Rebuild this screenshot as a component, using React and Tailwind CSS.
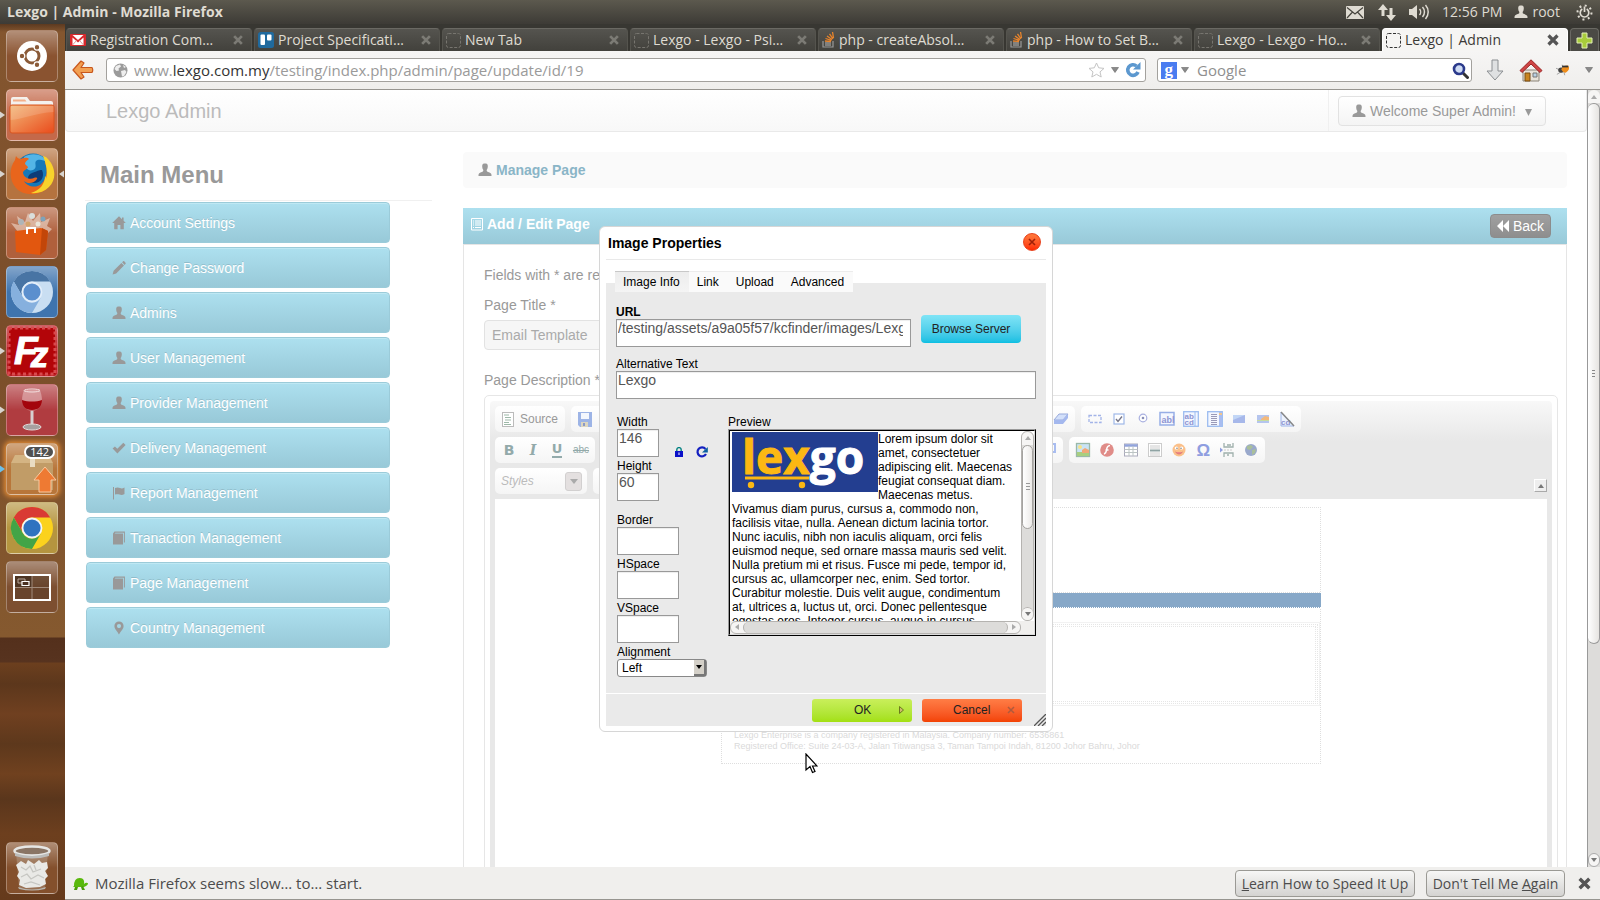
import React from "react";

const UI = "font-['Open_Sans','Noto_Sans',sans-serif]";

/* ---------- small glyph icons ---------- */
const G = ({ children, className = "", size = 14, vb = "0 0 14 14" }) => (
  <svg aria-hidden="true" width={size} height={size} viewBox={vb} className={"shrink-0 " + className}>{children}</svg>
);
const UserGlyph = (p) => (
  <G {...p}><path fill="currentColor" d="M4.2 3C4.2 1.2 5.300.6 7 .6S9.800 1.200 9.800 3c0 1.500-.3 2.800-.9 3.600-.3.400-.3 1.700.2 1.900 1 .6 4 1.400 4.200 2.500.2.600.2 1.400.2 2H.5c0-.6 0-1.400.2-2 .2-1.100 3.200-1.900 4.200-2.500.5-.2.500-1.500.2-1.900C4.500 5.800 4.200 4.500 4.200 3z" /></G>
);
const HomeGlyph = () => (<G><path fill="currentColor" d="M7 .3 .2 7h2v6.200h3.400V9h2.800v4.200h3.400V7h2L11.600 4.800V1.600H10v1.700z" /></G>);
const PencilGlyph = () => (<G><path fill="currentColor" d="M.6 13.400 1.600 9.800 9.400 2l2.600 2.600-7.800 7.800zM10.100 1.300 11.200.3c.6-.5 1 0 1.700.7s1.200 1.200.7 1.800l-1 1.100z" /></G>);
const CheckGlyph = () => (<G><path fill="currentColor" d="M.6 7.600 2.900 5.400 5.300 7.800 11.300 1.700 13.600 4 5.400 12.400z" /></G>);
const FlagGlyph = () => (<G><path fill="currentColor" d="M1 1h1v12.400H1zM3 2c2-1 4-.6 5 0s2.500.8 4.500-.4V8c-2 1.200-3.500 1-5 .5S4.500 8 3 8.600z" /></G>);
const BookGlyph = () => (<G><path fill="currentColor" d="M1 2.500 2.500.6h10.400v10.900h-1V1.700H3.300L2.700 2.500h8.300v11H1z" /></G>);
const PinGlyph = () => (<G><path fill="currentColor" fillRule="evenodd" d="M7 .5c2.600 0 4.600 2 4.600 4.600C11.600 8.500 8.500 10.500 7 13.600 5.500 10.500 2.400 8.500 2.400 5.100 2.400 2.500 4.400.5 7 .5zm0 2.500a2.100 2.100 0 1 0 0 4.200A2.100 2.100 0 0 0 7 3z" /></G>);
const ListGlyph = () => (<G className="text-white"><path d="M1.500 1.500h11v11.500h-11z" fill="none" stroke="currentColor" /><path d="M3 4h1M5 4h6M3 6h1M5 6h6M3 8h1M5 8h6M3 10.500h1M5 10.500h6" stroke="currentColor" /></G>);

const CrossGlyph = ({ className = "", size = 13 }) => (
  <G size={size} className={className}><path d="M2.500 2.500l9 9M11.500 2.500l-9 9" stroke="currentColor" strokeWidth="3.200" /></G>
);

/* ---------- top panel ---------- */
function TopPanel() {
  return (
    <header className={"flex h-6 shrink-0 items-center bg-linear-to-b from-[#5c594e] to-[#3d3b36] px-[7px] text-sm text-[#dfdbd2] " + UI}>
      <h1 className="text-sm font-bold">Lexgo | Admin - Mozilla Firefox</h1>
      <div className="ml-auto flex items-center">
        <svg width="18" height="13" viewBox="0 0 18 13" className="mr-[14px]"><rect width="18" height="13" rx="1" fill="#dfdbd2" /><path d="M1 1.500 9 8l8-6.500M1 12l5.500-6M17 12l-5.500-6" fill="none" stroke="#45433c" strokeWidth="1.200" /></svg>
        <svg width="18" height="17" viewBox="0 0 18 17" className="mr-[13px]"><path fill="#dfdbd2" d="M5 0l5 6H6.500v6h-3V6H0zM13 17l-5-6h3.500V4h3v7H18z" /></svg>
        <svg width="21" height="16" viewBox="0 0 21 16" className="mr-3"><path fill="#dfdbd2" d="M0 5h3l5-4v14l-5-4H0z" /><path d="M10.500 5c1.500 1.600 1.500 4.400 0 6M13.500 3c2.600 2.800 2.600 7.200 0 10M16.500 1c3.600 4 3.600 10 0 14" fill="none" stroke="#dfdbd2" strokeWidth="1.500" /></svg>
        <span className="mr-3">12:56 PM</span>
        <UserGlyph className="mr-1" />
        <span className="mr-4">root</span>
        <svg width="17" height="17" viewBox="0 0 17 17"><path d="M6.300 5a4.300 4.300 0 1 0 4.400 0M8.500 2.500v5.500" fill="none" stroke="#dfdbd2" strokeWidth="1.700" /><circle cx="8.500" cy="8.500" r="7" fill="none" stroke="#dfdbd2" strokeWidth="2" strokeDasharray="2 3.498" /></svg>
      </div>
    </header>
  );
}

/* ---------- launcher ---------- */
const Chrome = ({ a, b, c, core, dark }) => (
  <svg width="46" height="46" viewBox="0 0 46 46">
    <circle cx="23" cy="23" r="21" fill={b} />
    <path d="M4.800 12.500A21 21 0 0 1 41.200 12.500H23A10.500 10.500 0 0 0 13.900 28.200z" fill={a} />
    <path d="M4.800 12.500A21 21 0 0 0 23 44L32.100 28.200A10.500 10.500 0 0 1 13.900 28.200z" fill={c} />
    <circle cx="23" cy="23" r="9.500" fill={core} stroke={dark} strokeWidth="1.800" />
  </svg>
);

const icons = {
  files: (
    <svg width="48" height="46" viewBox="0 0 48 46">
      <defs><linearGradient id="fo" x1="0" y1="0" x2="1" y2="1"><stop offset="0" stopColor="#f2b878" /><stop offset="1" stopColor="#ea4b1c" /></linearGradient></defs>
      <path d="M3 7q0-2 2-2h14l3 4h21q2 0 2 2v8H3z" fill="#f4f1ee" /><path d="M5 7.500h12l1.500 2H5z" fill="#f3b08a" />
      <rect x="2" y="13" width="44" height="28" rx="2" fill="url(#fo)" stroke="#d9541f" /><path d="M2.500 28C15 27 28 21 45.500 20V14h-43z" fill="#fff" opacity=".15" />
    </svg>
  ),
  firefox: (
    <svg width="46" height="46" viewBox="0 0 46 46">
      <circle cx="24" cy="21" r="18.500" fill="#1678b8" /><path d="M15 6c8-5 20-3 24 6-5-4-10-4-12-2s2 7-3 9-8-3-9-6z" fill="#54b5e6" /><path d="M33 19c3 7-1 13-8 13s-8-8-2-10 6-3 10-3z" fill="#0d3c78" />
      <path d="M38 9c7 8 8 18 2 26C33 45 15 46 7 37 0 29 0 17 6 9l1-4c1 2 3 3 5 3 4-2 7-1 8 0-2 1-4 3-4 5l3 3c0 2-5 3-5 6 1 5 7 7 11 5 2-1 4 0 3 1-3 5-10 5-13 2 3 6 13 8 18 2 5-5 6-14 3-20z" fill="#e8651c" />
      <path d="M37 6c10 9 11 22 3 30-5 5-12 7-18 6 9-3 14-9 14-17 1 1 1 2 1 3 2-7 0-16-3-23z" fill="#f8d32c" />
    </svg>
  ),
  software: (
    <svg width="46" height="46" viewBox="0 0 46 46">
      <path d="M9 22 2 13l8 2-2-9 8 6 3-9 5 8 7-8 1 9 9-4-3 8 5 3-5 5z" fill="#f6e6da" opacity=".55" />
      <circle cx="12" cy="12" r="3" fill="#aeb5b8" /><circle cx="23" cy="6" r="3" fill="#dadfdc" /><circle cx="34" cy="9" r="2.500" fill="#7da3ba" /><circle cx="19" cy="14" r="2.500" fill="#d4a36a" /><circle cx="29" cy="14" r="2.500" fill="#e9e4d8" />
      <path d="M6 21l26-3 7 3-2 19-6 5-24-3z" fill="#e2570f" /><path d="M33 18l6 3-2 19-6 5z" fill="#c24609" /><path d="M18 24v-6h8v5" fill="none" stroke="#fff" strokeWidth="2" />
    </svg>
  ),
  filezilla: (
    <svg width="50" height="50" viewBox="0 0 50 50">
      <rect x="2" y="2" width="46" height="46" fill="#b30509" stroke="#d94a4e" strokeWidth="3" strokeDasharray="3 2.500" />
      <text x="7" y="38" fontSize="39" fontWeight="bold" fontStyle="italic" fill="#fff" stroke="#fff" fontFamily="Liberation Sans, sans-serif">F<tspan dx="-7" dy="3" fontSize="35">z</tspan></text>
    </svg>
  ),
  wine: (
    <svg width="40" height="48" viewBox="0 0 40 48">
      <path d="M12 4h16c4 11 2 20-8 21C10 24 8 15 12 4z" fill="#e5b7b9" opacity=".6" /><path d="M10 14c6 2 14 2 20 0 0 6-3 10-10 10-7 0-10-4-10-10z" fill="#a3050c" />
      <path d="M18.500 25h3v14h-3z" fill="#d7d0d0" /><ellipse cx="20" cy="41" rx="9" ry="3" fill="#a6a1a0" stroke="#e3dcda" /><ellipse cx="20" cy="4.500" rx="8" ry="1.500" fill="none" stroke="#f3dede" />
    </svg>
  ),
  updater: (
    <svg width="50" height="48" viewBox="0 0 50 48">
      <path d="M8 10h34l4 8v27H4V18z" fill="#d4b483" /><path d="M4 18h42v27H4z" fill="#c19c67" /><path d="M23 9h5v13h-5z" fill="#e9dcc2" />
      <path d="M38 22l11 13h-5v12H32V35h-5z" fill="#ee7a33" stroke="#f9c9a0" />
    </svg>
  ),
  workspace: (
    <svg width="38" height="27" viewBox="0 0 38 27">
      <path d="M2 2h17v11H2z" fill="#3d281b" /><rect x="1" y="1" width="36" height="25" fill="#5a3d2a" fillOpacity=".6" stroke="#fff" strokeWidth="2" /><path d="M19 2v23M2 13.500h34" stroke="#a08a7a" />
      <path d="M5 5h7v4H5z" fill="none" stroke="#b8a89c" /><path d="M9 7.500h7v4H9z" fill="#4a3020" stroke="#fff" strokeWidth="1.200" />
    </svg>
  ),
};

const launcher = [
  { name: "Files", icon: icons.files, bg: "bg-[#c4694a]", run: true },
  { name: "Firefox", icon: icons.firefox, bg: "bg-[#b5733f]", run: true, focus: true },
  { name: "Software Center", icon: icons.software, bg: "bg-[#b0603c]" },
  { name: "Chromium", icon: <Chrome a="#4874a4" b="#c9def2" c="#86b0de" core="#5b8fce" dark="#e3eefa" />, bg: "bg-[#3f74ae]" },
  { name: "FileZilla", icon: icons.filezilla, bg: "bg-[#b51c20]", run: true },
  { name: "Wine", icon: icons.wine, bg: "bg-[#b03c40]", run: true },
  { name: "Software Updater", icon: icons.updater, bg: "bg-[#b8763a] shadow-[0_0_5px_2px_#e08a35]", run: true, badge: "142" },
  { name: "Chrome", icon: <Chrome a="#d93a34" b="#fbd21d" c="#43a447" core="#2f73c0" dark="#f5f5f5" />, bg: "bg-[#b5953f]" },
  { name: "Workspace Switcher", icon: icons.workspace, bg: "bg-[#7d4f30]" },
];

const tile = "relative flex h-[52px] w-[52px] shrink-0 items-center justify-center rounded-[5px] border border-white/30 bg-linear-to-b from-white/35 via-white/0 to-white/0";

function Launcher() {
  return (
    <nav aria-label="Launcher" className="relative flex w-[65px] shrink-0 flex-col items-center bg-[linear-gradient(180deg,#5c3a20_0,#84562f_8px,#7a4d2a_300px,#85592f_613px,#54301c_614px,#57331f_638px,#6c3f1e_639px,#5c371c_660px,#704020_690px,#5d381c_720px,#70411f_750px,#5a361c_775px,#6d3f1e_810px,#653a1c_876px)] pt-[6px] pr-[1px] pb-[6px]">
      <button type="button" aria-label="Dash home" className={tile + " bg-[#8a5330]"}>
        <svg width="30" height="30" viewBox="0 0 30 30">
          <circle cx="15" cy="15" r="15" fill="#fff" /><circle cx="15" cy="15" r="7" fill="none" stroke="#8a5a38" strokeWidth="3" />
          <g fill="#8a5a38" stroke="#fff" strokeWidth="1.200"><circle cx="5" cy="15" r="2.800" /><circle cx="20" cy="6.300" r="2.800" /><circle cx="20" cy="23.700" r="2.800" /></g>
        </svg>
      </button>
      <ul className="mt-[7px] flex flex-col gap-[7px]">
        {launcher.map((l) => (
          <li key={l.name} className="relative">
            <button type="button" aria-label={l.name} className={tile + " " + l.bg}>
              {l.icon}
              {l.badge && <span className={"absolute top-[1px] right-[2px] rounded-full border-2 border-white bg-[#505050] px-1 text-[11px] leading-[10px] text-white " + UI}>{l.badge}</span>}
            </button>
            {l.run && <svg width="5" height="10" viewBox="0 0 5 10" className="absolute top-[21px] left-[-6px]"><path d="M0 1.500L5 5 0 8.500z" fill={l.badge ? "#6cc0ea" : "#d8d4cf"} /></svg>}
            {l.focus && <svg width="5" height="10" viewBox="0 0 5 10" className="absolute top-[21px] right-[-6px]"><path d="M5 1.500L0 5l5 3.500z" fill="#d8d4cf" /></svg>}
          </li>
        ))}
      </ul>
      <button type="button" aria-label="Trash" className={tile + " mt-auto bg-[#84502c]"}>
        <svg width="40" height="46" viewBox="0 0 40 46">
          <path d="M4 7h32l-3 36q-13 4-26 0z" fill="#d9d2ca" opacity=".25" /><path d="M6 42q14 5 28 0l-1 2q-13 3-26 0z" fill="#b9b6b0" />
          <path d="M4 20l5-4 5 3 2-4 6 4 5-4 3 3 5-1 1 6-3 3 3 5-3 3 1 5-6 3-14 1-7-3 1-5-3-4 2-4z" fill="#e9e9e6" /><path d="M9 22l5 3 4-4 3 6 8-3M9 32l6-3 4 5 7-4 6 3M12 39l7-2 9 3M22 20l2 5" fill="none" stroke="#c6c6c2" strokeWidth="1.300" />
          <ellipse cx="20" cy="6" rx="17.500" ry="4.500" fill="#8a7565" stroke="#e6e6e4" strokeWidth="2.500" /><path d="M3 8q17 6 34 0v3q-17 5-34 0z" fill="#bcbcba" />
        </svg>
      </button>
    </nav>
  );
}

/* ---------- browser chrome ---------- */
const EmptyFav = ({ dark }) => (
  <svg width="15" height="15" viewBox="0 0 15 15" className="shrink-0"><rect x=".5" y=".5" width="14" height="14" rx="2" fill="none" stroke={dark ? "#333" : "#77756f"} strokeDasharray="3 1.500" /></svg>
);
const Gmail = () => (<svg width="16" height="12" viewBox="0 0 16 12" className="shrink-0"><rect width="16" height="12" rx="1" fill="#d8282c" /><path d="M2.500 1h11L8 6z" fill="#fff" /><path d="M2.500 11V3.500L8 8.500l5.500-5V11z" fill="#fff" /><path d="M2.500 11l4-4.500M13.500 11l-4-4.500" stroke="#d99" /></svg>);
const Trello = () => (<svg width="16" height="16" viewBox="0 0 16 16" className="shrink-0"><rect width="16" height="16" rx="2.500" fill="#206a9e" /><rect x="2.500" y="2.500" width="4.500" height="10.500" rx="1" fill="#fff" /><rect x="9" y="2.500" width="4.500" height="6" rx="1" fill="#fff" /></svg>);
const Stack = () => (<svg width="13" height="16" viewBox="0 0 13 16" className="shrink-0"><path d="M1 9v6h10V9" fill="none" stroke="#999" strokeWidth="1.200" /><path d="M3 13h6M3 11h6" stroke="#bbb" /><path d="M3 9l6 .5M3.500 6.500l6 1.800M5 4l5 3.500M7.500 1.800l3.500 5M10.500 0l1 6" stroke="#e8842c" strokeWidth="1.300" /></svg>);

const tabs = [
  { fav: <Gmail />, label: "Registration Com…" },
  { fav: <Trello />, label: "Project Specificati…" },
  { fav: <EmptyFav />, label: "New Tab" },
  { fav: <EmptyFav />, label: "Lexgo - Lexgo - Psi…" },
  { fav: <Stack />, label: "php - createAbsol…" },
  { fav: <Stack />, label: "php - How to Set B…" },
  { fav: <EmptyFav />, label: "Lexgo - Lexgo - Ho…" },
  { fav: <EmptyFav dark />, label: "Lexgo | Admin", active: true },
];

function TabStrip() {
  return (
    <div className={"flex h-[27px] shrink-0 items-end gap-[2px] bg-[#383732] pr-[1px] pl-[1px] text-sm " + UI}>
      {tabs.map((t) => (
        <div key={t.label} className={"flex h-[23px] min-w-0 flex-1 items-center rounded-t-[4px] border-x border-t pr-[7px] pl-[3px] " + (t.active ? "border-white bg-[#f6f5f3] text-[#3c3b37]" : "border-[#6a6963] border-x-[#55544e] bg-linear-to-b from-[#55544f] to-[#42413c] text-[#dfdbd2]")}>
          {t.fav}
          <button type="button" className="ml-1 min-w-0 flex-1 overflow-hidden text-left leading-5 whitespace-nowrap">{t.label}</button>
          <button type="button" aria-label="Close tab"><CrossGlyph className={t.active ? "text-[#555]" : "text-[#7c7b75]"} size={t.active ? 14 : 12} /></button>
        </div>
      ))}
      <button type="button" aria-label="New tab" className="flex h-[23px] w-[29px] items-center justify-center rounded-t-[4px] border-x border-t border-[#6a6963] bg-[#4b4a45]">
        <svg width="17" height="17" viewBox="0 0 17 17"><path d="M6 1h5v5h5v5h-5v5H6v-5H1V6h5z" fill="#a8cc3c" stroke="#e4f0b8" /></svg>
      </button>
    </div>
  );
}

const Caret = ({ className = "" }) => (<svg width="8" height="6" viewBox="0 0 8 6" className={className}><path d="M.5.5h7L4 5.500z" fill="#8a8a8a" stroke="#666" strokeWidth=".6" /></svg>);

function NavBar() {
  return (
    <div className={"flex h-[39px] shrink-0 items-center border-b border-[#979590] bg-linear-to-b from-[#f6f5f4] to-[#efeeec] pl-[7px] text-[15px] " + UI}>
      <button type="button" aria-label="Back" className="mr-3">
        <svg width="22" height="20" viewBox="0 0 22 20"><path d="M1 10l8-9 3 2-3 4.500H20q1.500 2.500 0 5H9l3 4.500-3 2z" fill="#f2a052" stroke="#c8571c" strokeWidth="1.200" strokeLinejoin="round" /></svg>
      </button>
      <form className="flex h-6 min-w-0 flex-1 items-center rounded-[3px] border border-[#a3a19d] bg-white pr-1 pl-[6px]">
        <svg width="15" height="15" viewBox="0 0 15 15" className="mr-[6px] shrink-0"><circle cx="7.500" cy="7.500" r="7" fill="#9b9b9b" /><path d="M3 3l4-1.500 1 2-2.500 2 .5 2L3.500 8 1.500 6zM8 8l4-1 1.500 2-2.500 4-2 .5zM10 2l3 2-2 1z" fill="#eee" /></svg>
        <p className="min-w-0 flex-1 overflow-hidden whitespace-nowrap text-[#9a9a9a]">www.<span className="text-[#333]">lexgo.com.my</span>/testing/index.php/admin/page/update/id/19</p>
        <svg width="17" height="16" viewBox="0 0 17 16" className="mr-[6px]"><path d="M8.500 1l2.200 4.800 5.300.6-4 3.500 1.200 5.100-4.700-2.700L3.800 15 5 9.900 1 6.400l5.300-.6z" fill="#fff" stroke="#c4c4c4" /></svg>
        <Caret className="mr-[6px]" />
        <svg width="16" height="16" viewBox="0 0 16 16"><path d="M11.500 4A5.300 5.300 0 1 0 13 10" fill="none" stroke="#5c98cf" strokeWidth="3.600" /><path d="M15.500 0v7.500H8z" fill="#5c98cf" /></svg>
      </form>
      <form className="ml-[11px] flex h-6 w-[315px] items-center rounded-[3px] border border-[#a3a19d] bg-white pr-[2px] pl-[3px]">
        <svg width="16" height="17" viewBox="0 0 16 17" className="mr-1 shrink-0"><rect width="16" height="17" fill="#4a7cf0" /><text x="3.500" y="12.500" fontSize="17" fontWeight="bold" fill="#fff" fontFamily="Liberation Serif, serif">g</text></svg>
        <Caret className="mr-2" />
        <input aria-label="Search" placeholder="Google" className="min-w-0 flex-1 outline-none placeholder:text-[#8f8f8f]" />
        <svg width="17" height="17" viewBox="0 0 17 17"><path d="M10.500 10.500l5 5" stroke="#333" strokeWidth="3" strokeLinecap="round" /><circle cx="7" cy="7" r="5" fill="#cfdcf4" stroke="#2b3a8c" strokeWidth="2.600" /></svg>
      </form>
      <button type="button" aria-label="Downloads" className="ml-[13px]"><svg width="20" height="22" viewBox="0 0 20 22"><path d="M7 1h6v11h5l-8 9-8-9h5z" fill="#dfe1e2" stroke="#8b8f92" /></svg></button>
      <button type="button" aria-label="Home" className="ml-[14px]"><svg width="24" height="23" viewBox="0 0 24 23"><path d="M4 11h16v11H4z" fill="#e8e3da" stroke="#8b8478" /><path d="M6 14h5v8H6z" fill="#c88420" stroke="#7a4d10" /><path d="M14 14h4v4h-4z" fill="#b9d2e4" stroke="#777" /><path d="M12 .8L1 11.500l2 2L12 5l9 8.500 2-2z" fill="#cf4545" stroke="#992424" /></svg></button>
      <button type="button" aria-label="Firebug" className="ml-3"><svg width="16" height="14" viewBox="0 0 18 16"><path d="M1 6l5 2M2 13l5-3M8 2l1 5M11 14l-1-4" stroke="#999" /><ellipse cx="7" cy="8" rx="3.500" ry="3" fill="#444" /><path d="M7 7q3-5 8-4 3 4-3 8-3 0-5-4z" fill="#ef8d1a" /><path d="M8 4l7 0" stroke="#333" strokeWidth="2" /></svg></button>
      <Caret className="mr-[7px] ml-[14px]" />
    </div>
  );
}

function NoticeBar() {
  const btn = "h-[27px] rounded-[4px] border border-[#9a9994] bg-linear-to-b from-[#f7f7f6] to-[#d4d3d1] px-1 text-sm whitespace-nowrap";
  return (
    <div className={"flex h-[33px] shrink-0 items-center border-b border-[#979590] bg-[#f0efed] pt-[1px] pr-2 pl-[7px] text-[15px] text-[#4c4c4c] " + UI}>
      <svg width="16" height="14" viewBox="0 0 16 14" className="mr-[7px]"><path d="M2 9Q2 1 7.500 1T12 7q2-2 3.500-1T14 9l-2 1H1z" fill="#59b80c" /><path d="M3 10l-1 3h3l1-3M9 10l1 3h3l-2-4" fill="#4a9c0a" /></svg>
      <p>Mozilla Firefox seems slow… to… start.</p>
      <button type="button" className={btn + " ml-auto w-[180px]"}><u>L</u>earn How to Speed It Up</button>
      <button type="button" className={btn + " ml-[11px] w-[139px]"}>Don't Tell Me <u>A</u>gain</button>
      <button type="button" aria-label="Dismiss" className="ml-3"><CrossGlyph size={15} className="text-[#555]" /></button>
    </div>
  );
}

/* ---------- page ---------- */
const menu = [
  ["Account Settings", <HomeGlyph />], ["Change Password", <PencilGlyph />], ["Admins", <UserGlyph />], ["User Management", <UserGlyph />],
  ["Provider Management", <UserGlyph />], ["Delivery Management", <CheckGlyph />], ["Report Management", <FlagGlyph />],
  ["Tranaction Management", <BookGlyph />], ["Page Management", <BookGlyph />], ["Country Management", <PinGlyph />],
];

function SideMenu() {
  return (
    <aside className="w-[347px] shrink-0">
      <h2 className="border-b border-[#f0f0f0] pt-[23px] pb-[5px] pl-[15px] text-2xl leading-10 font-bold text-[#999]">Main Menu</h2>
      <ul className="mt-[1px] ml-[1px] flex w-[304px] flex-col gap-1">
        {menu.map(([label, icon]) => (
          <li key={label}>
            <a href="#" className="flex h-[41px] items-center gap-1 rounded-[4px] border border-[#9bcbd9] bg-linear-to-b from-[#ade0ef] to-[#98c9d8] pl-[25px] text-sm text-white shadow-[inset_0_1px_0_#bfe8f3] [text-shadow:0_-1px_0_rgba(0,0,0,0.12)]">
              <span className="text-[#999]">{icon}</span>{label}
            </a>
          </li>
        ))}
      </ul>
    </aside>
  );
}

const B = "#a3b4e8";
const I16 = ({ children }) => <svg width="16" height="16" viewBox="0 0 16 16">{children}</svg>;
const formIcons = [
  ["Form", <I16><rect x="2" y="4.500" width="12" height="7" fill="none" stroke={B} strokeWidth="1.300" strokeDasharray="3 1.500" /></I16>],
  ["Checkbox", <I16><rect x="3" y="3" width="10" height="10" fill="#fff" stroke="#9fb8e8" strokeWidth="1.200" /><path d="M5 8l2 2.500 4-5" fill="none" stroke="#778" strokeWidth="1.400" /></I16>],
  ["Radio Button", <I16><circle cx="8" cy="7" r="3.800" fill="#fff" stroke="#a9b0e0" strokeWidth="1.200" /><circle cx="8" cy="7" r="1.300" fill="#8a90b8" /></I16>],
  ["Text Field", <I16><rect x="1" y="1.500" width="14" height="12.500" fill="#f4f7ff" stroke="#97aee6" strokeWidth="1.500" /><text x="2.500" y="11.500" fontSize="9" fontWeight="bold" fill="#8d94d2" fontFamily="Liberation Sans, sans-serif">abl</text></I16>],
  ["Textarea", <I16><rect x=".7" y=".7" width="14.600" height="14.600" fill="#f4f7ff" stroke="#9cbcf0" strokeWidth="1.300" /><text x="1.500" y="7.500" fontSize="8" fontWeight="bold" fill="#8d94d2" fontFamily="Liberation Sans, sans-serif">ab</text><text x="1.500" y="14" fontSize="8" fontWeight="bold" fill="#8d94d2" fontFamily="Liberation Sans, sans-serif">cd</text><path d="M12 1v14" stroke="#9cbcf0" /></I16>],
  ["Selection Field", <I16><rect x=".7" y=".7" width="14.600" height="14.600" fill="#f4f7ff" stroke="#9cbcf0" strokeWidth="1.300" /><path d="M4 3.500h6M4 5.500h6M4 7.500h6M4 9.500h6M4 11.500h6M4 13.500h6" stroke="#9a9ab8" /><path d="M12 1h3v14h-3z" fill="#a9bdf0" /><path d="M12 3h3" stroke="#f3c58a" strokeWidth="2" /></I16>],
  ["Button", <I16><rect x="2" y="4" width="12" height="8" fill="#a7b8ea" /><path d="M2 4h12L2 9z" fill="#c2d6f6" /></I16>],
  ["Image Button", <I16><rect x="2" y="4" width="12" height="8" fill="#b5c5ee" /><path d="M6 8l4-3 4 1v3H6z" fill="#f3b97c" /><path d="M2 9h12v1H2z" fill="#c6dca0" /></I16>],
  ["Hidden Field", <I16><path d="M2 1v14h13z" fill="#edf2fd" stroke="#9cb4e8" /><text x="2" y="14" fontSize="8" fontWeight="bold" fill="#8d94d2" fontFamily="Liberation Sans, sans-serif">cd</text><path d="M2 1l13 14" stroke="#888" strokeWidth="1.500" /></I16>],
];
const insertIcons = [
  ["Image", <I16><rect x="1.500" y="1.500" width="13" height="13" fill="#c9e3f5" stroke="#9ab9a8" strokeWidth="1.300" /><path d="M2 10h12v4H2z" fill="#a8cf80" /><path d="M7 8l3-2 4 2v3H7z" fill="#f0a878" /><circle cx="5" cy="5" r="2" fill="#f7e38a" /></I16>],
  ["Flash", <I16><circle cx="8" cy="8" r="6.800" fill="#e08c88" /><path d="M11 3.500q-3 .3-3.500 4.500-.5 3.500-2.500 4M6.500 8h3" fill="none" stroke="#fff" strokeWidth="1.500" /></I16>],
  ["Table", <I16><rect x="1.500" y="2" width="13" height="12" fill="#fff" stroke="#aab" /><path d="M1.500 3.500h13" stroke="#92a4dc" strokeWidth="2.500" /><path d="M1.500 7.500h13M1.500 10.500h13M6 4v10M10 4v10" stroke="#bcc4c4" /></I16>],
  ["Horizontal Line", <I16><rect x="1.500" y="1.500" width="13" height="13" fill="#fff" stroke="#ccc" /><path d="M3 4h10M3 6h10M3 11h10M3 13h10" stroke="#ccc" /><path d="M3 8.500h10" stroke="#8fa3a3" strokeWidth="2" /></I16>],
  ["Smiley", <I16><circle cx="8" cy="8" r="6.500" fill="#fbc08a" /><path d="M4.500 10q3.500 4 7 0" fill="#e88" stroke="#d77" /><ellipse cx="5.500" cy="6" rx="1.800" ry="1.500" fill="#fff" /><ellipse cx="10.500" cy="6" rx="1.800" ry="1.500" fill="#fff" /><circle cx="6" cy="6.300" r=".7" fill="#666" /><circle cx="10" cy="6.300" r=".7" fill="#666" /></I16>],
  ["Special Character", <I16><text x="1.500" y="13.500" fontSize="17" fontWeight="bold" fill="#8f9ee0" fontFamily="Liberation Sans, sans-serif">Ω</text></I16>],
  ["Page Break", <I16><path d="M5 1v4h9V1M5 15v-4h9v4M8 3h4M8 13h2" fill="none" stroke="#9fb0ac" strokeWidth="1.300" /><path d="M1 5.500v5L4 8z" fill="#8f9ee0" /><path d="M5 8h9" stroke="#ccc" strokeDasharray="2 1" /></I16>],
  ["IFrame", <I16><circle cx="8" cy="8" r="6" fill="#9aa9cc" /><path d="M4 4l4-1 2 2-3 3-3-1zM9 8l4-1-1 4-3 2z" fill="#a9bf9a" /></I16>],
];

const group = "flex h-[26px] shrink-0 items-center rounded-[5px] bg-linear-to-b from-white to-[#f5f5f5] px-[2px]";
const ToolBtn = ({ label, children }) => (
  <button type="button" aria-label={label} className="flex h-6 w-6 items-center justify-center text-[#93aaaa]">{children}</button>
);

function Editor() {
  return (
    <div className="mt-[5px] rounded-[5px] border border-[#e6e6e6] p-[5px]">
      <div className="rounded-t-[4px] bg-[linear-gradient(180deg,#f8f8f8_0,#e8e8e8_40px)] p-[5px]">
        <div className="flex flex-col gap-[5px] pb-[5px]">
          <div className="flex gap-[6px]">
            <div className={group}>
              <button type="button" className="flex w-[66px] items-center justify-center gap-[6px] text-xs text-[#999]">
                <svg width="12" height="15" viewBox="0 0 12 15"><rect x=".5" y=".5" width="11" height="14" fill="#fff" stroke="#bbb" /><path d="M2 3h5M3 5.500h6M3 8h6M2 10.500h5M2 12.500h7" stroke="#9db8a8" /></svg>Source
              </button>
            </div>
            <div className={group + " w-[504px] justify-between"}>
              <ToolBtn label="Save"><svg width="14" height="15" viewBox="0 0 14 15"><path d="M0 0h14v15H2l-2-2z" fill="#9db4e6" /><path d="M3 1h8v6H3z" fill="#f4f7fd" /><path d="M3 10h7v5H3z" fill="#dcd6c0" /><path d="M5 11h2v3H5z" fill="#8a99c8" /></svg></ToolBtn>
              <ToolBtn label="Remove Format"><I16><path d="M6 3h9l-5 6H1z" fill="#d3e0fa" stroke="#98aadc" /><path d="M1 9h9l5-6v4l-5 6H1z" fill="#a4b8ee" /></I16></ToolBtn>
            </div>
            <div className={group}>{formIcons.map(([l, i]) => <ToolBtn key={l} label={l}>{i}</ToolBtn>)}</div>
          </div>
          <div className="flex gap-[6px]">
            <div className={group}>
              <ToolBtn label="Bold"><b className="font-['DejaVu_Sans',sans-serif] text-sm">B</b></ToolBtn>
              <ToolBtn label="Italic"><i className="font-['DejaVu_Serif',serif] text-sm font-bold">I</i></ToolBtn>
              <ToolBtn label="Underline"><b className="border-b-2 font-['DejaVu_Sans',sans-serif] text-[13px] leading-[14px]">U</b></ToolBtn>
              <ToolBtn label="Strike Through"><s className="text-[10px]">abc</s></ToolBtn>
            </div>
            <div className={group + " w-[462px] justify-end"}><ToolBtn label="Anchor"><I16><path d="M8 2h6v8H9" fill="none" stroke="#a9bdf0" strokeWidth="2" /></I16></ToolBtn></div>
            <div className={group}>{insertIcons.map(([l, i]) => <ToolBtn key={l} label={l}>{i}</ToolBtn>)}</div>
          </div>
          <div className="flex gap-[6px]">
            <div className={group + " w-[92px]"}>
              <button type="button" className="flex w-full items-center justify-between pr-[3px] pl-1 text-xs text-[#bbb] italic">Styles
                <span className="flex h-[19px] w-[17px] items-center justify-center rounded-[3px] border border-[#d2d0d0] bg-[#e4e0e0]"><svg width="8" height="5"><path d="M0 0h8L4 5z" fill="#aaa" /></svg></span>
              </button>
            </div>
            <div className={group + " w-[92px]"} />
            <button type="button" aria-label="Collapse Toolbar" className="mb-[2px] ml-auto flex h-[13px] w-[13px] items-center justify-center self-end border border-[#aaa] border-t-white border-l-white bg-[#eee]"><svg width="6" height="4"><path d="M3 0L6 4H0z" fill="#777" /></svg></button>
          </div>
        </div>
        <div className="h-[520px] bg-white pt-2">
          <div className="mx-auto flex h-[257px] w-[600px] flex-col border border-dotted border-[#dedede]">
            <div className="h-[85px] border-b border-dotted border-[#dedede]" />
            <div className="-mr-[1px] h-[15px] border-b border-dotted border-white bg-[#87a8c8]" />
            <div className="mt-[14px] h-[84px] border border-[#f2f2f2] p-[1px]"><div className="h-full border border-dotted border-[#e6e6e6] p-[1px]"><div className="h-full border border-dotted border-[#e6e6e6]" /></div></div>
            <p className="mt-6 pl-3 text-[9px] leading-[11px] text-[#dadada]">
              Lexgo Enterprise is a company registered in Malaysia. Company number: 6536861<br />
              Registered Office: Suite 24-03-A, Jalan Titiwangsa 3, Taman Tampoi Indah, 81200 Johor Bahru, Johor
            </p>
          </div>
        </div>
      </div>
    </div>
  );
}

/* ---------- dialog ---------- */
const field = "block h-7 border border-[#999] bg-white pb-[9px] pl-[1px] text-sm leading-[18px] text-[#555] shadow-[inset_0_1px_1px_rgba(0,0,0,0.075)] outline-none";
const Field = ({ id, label, value = "", w, gap = "mt-[2px]" }) => (
  <div className={gap}>
    <label htmlFor={id} className="block leading-[14px]">{label}</label>
    <input id={id} defaultValue={value} className={field + " " + w} />
  </div>
);

const lorem = "Lorem ipsum dolor sit amet, consectetuer adipiscing elit. Maecenas feugiat consequat diam. Maecenas metus. Vivamus diam purus, cursus a, commodo non, facilisis vitae, nulla. Aenean dictum lacinia tortor. Nunc iaculis, nibh non iaculis aliquam, orci felis euismod neque, sed ornare massa mauris sed velit. Nulla pretium mi et risus. Fusce mi pede, tempor id, cursus ac, ullamcorper nec, enim. Sed tortor. Curabitur molestie. Duis velit augue, condimentum at, ultrices a, luctus ut, orci. Donec pellentesque egestas eros. Integer cursus, augue in cursus faucibus, eros pede bibendum sem, in tempus tellus justo quis ligula.";

const Logo = () => (
  <svg width="146" height="60" viewBox="0 0 146 60" className="float-left" role="img" aria-label="lexgo">
    <rect width="146" height="60" fill="#233e90" />
    <text x="10" y="42" fontSize="46" fontWeight="bold" fill="#fcb813" stroke="#fcb813" fontFamily="Open Sans, sans-serif">lex<tspan fill="#fff" stroke="#fff">go</tspan></text>
    <path d="M13 44.500h64v3H13z" fill="#fcb813" /><circle cx="19" cy="53" r="3.200" fill="#fcb813" /><circle cx="70" cy="53" r="3.200" fill="#fcb813" />
  </svg>
);

const Arrow = ({ d, color = "#777" }) => <svg width="8" height="8" viewBox="0 0 8 8"><path d={d} fill={color} /></svg>;

function Preview() {
  return (
    <div className="h-[207px] w-[308px] border border-black border-t-[#999] border-l-[#999]">
      <div className="flex h-full flex-col border border-[#ddd] border-t-black border-l-black bg-white">
        <div className="flex min-h-0 flex-1">
          <div className="min-w-0 flex-1 overflow-hidden pt-[1px] pr-[6px] pl-[2px]"><Logo /><p className="leading-[14px]">{lorem}</p></div>
          <div className="flex w-[13px] flex-col rounded-[6px] border border-[#b5b3b0] bg-[#dddcda]">
            <span className="flex h-[13px] items-center justify-center rounded-t-[6px] bg-[#f6f5f4]"><Arrow d="M4 2l3 4H1z" color="#aaa" /></span>
            <span className="flex h-[84px] flex-col items-center justify-center gap-[2px] rounded-[6px] border border-[#a5a3a0] bg-linear-to-r from-white to-[#eceae8]"><i className="h-px w-1 bg-[#999]" /><i className="h-px w-1 bg-[#999]" /><i className="h-px w-1 bg-[#999]" /></span>
            <span className="mt-auto flex h-[13px] items-center justify-center rounded-[6px] border-t border-[#b5b3b0] bg-[#f6f5f4]"><Arrow d="M4 6L1 2h6z" /></span>
          </div>
        </div>
        <div className="flex h-[13px] bg-[#f0efed] pr-[13px]">
          <div className="flex flex-1 rounded-[6px] border border-[#b5b3b0] bg-[#f6f5f4]">
            <span className="flex w-3 items-center justify-center"><Arrow d="M2 4l4-3v6z" color="#aaa" /></span>
            <span className="flex-1 rounded-[6px] border-x border-[#b5b3b0] bg-[#dddcda]" />
            <span className="flex w-3 items-center justify-center"><Arrow d="M6 4L2 1v6z" color="#aaa" /></span>
          </div>
        </div>
      </div>
    </div>
  );
}

function ImageDialog() {
  const tab = "border-t border-[#ececec] bg-[#fafafa] pr-[9px] pl-2";
  return (
    <section role="dialog" aria-label="Image Properties" className="w-[454px] rounded-[6px] border border-[#d6d6d6] bg-white px-[6px] pb-[5px] text-xs text-black">
      <div className="flex h-[33px] items-center border-b border-[#e9e9e9] pr-[5px] pl-[2px]">
        <h2 className="text-sm font-bold">Image Properties</h2>
        <button type="button" aria-label="Close" className="mb-[2px] ml-auto flex h-[18px] w-[18px] items-center justify-center rounded-full border border-[#e8401a] bg-linear-to-b from-[#ff7a3c] to-[#ff2800]">
          <svg width="8" height="8" viewBox="0 0 8 8"><path d="M1 1l6 6M7 1L1 7" stroke="#a02008" strokeWidth="1.600" /></svg>
        </button>
      </div>
      <div role="tablist" className="relative z-10 mt-[11px] -mb-[9px] ml-[9px] flex h-[21px] w-fit leading-[21px]">
        <button type="button" role="tab" aria-selected="true" className="border-t border-[#c8c8c8] bg-linear-to-b from-[#ededed] to-[#f4f4f4] pr-[9px] pl-2">Image Info</button>
        <button type="button" role="tab" className={tab}>Link</button>
        <button type="button" role="tab" className={tab}>Upload</button>
        <button type="button" role="tab" className={tab}>Advanced</button>
      </div>
      <div className="border-b border-white bg-[#eaeaea] px-[10px] pt-[22px] pb-4">
        <div className="flex items-start gap-[10px]">
          <div>
            <label htmlFor="url" className="block leading-[14px] font-bold">URL</label>
            <input id="url" defaultValue="/testing/assets/a9a05f57/kcfinder/images/Lexgo.png" className={field + " w-[295px] pr-[7px]"} />
          </div>
          <button type="button" className="mt-[10px] h-7 w-[100px] rounded-[4px] bg-linear-to-b from-[#7fe4f6] to-[#08bfe2] text-[#222]">Browse Server</button>
        </div>
        <Field id="alt" label="Alternative Text" value="Lexgo" w="w-[420px]" gap="mt-[10px]" />
        <div className="mt-4 flex">
          <div className="w-[112px] pl-[1px]">
            <div className="flex items-center">
              <div>
                <Field id="width" label="Width" value="146" w="w-[42px]" gap="mt-0" />
                <Field id="height" label="Height" value="60" w="w-[42px]" />
              </div>
              <button type="button" aria-label="Lock Ratio" className="mb-3 ml-4"><svg width="8" height="10" viewBox="0 0 8 10"><path d="M1.800 5V2.800a2.200 2.200 0 0 1 4.400 0V5" fill="none" stroke="#008080" strokeWidth="1.400" /><rect y="4" width="8" height="6" fill="#0a10c8" /><path d="M4 5.500v2.500" stroke="#fff" /></svg></button>
              <button type="button" aria-label="Reset Size" className="mb-3 ml-[13px]"><svg width="12" height="12" viewBox="0 0 12 12"><path d="M9.500 3A4.500 4.500 0 1 0 10 8" fill="none" stroke="#1420c0" strokeWidth="2.200" /><path d="M11.800 1v5.500H6z" fill="#0a60a0" /></svg></button>
            </div>
            <Field id="border" label="Border" w="w-[62px]" gap="mt-3" />
            <Field id="hspace" label="HSpace" w="w-[62px]" />
            <Field id="vspace" label="VSpace" w="w-[62px]" />
            <div className="mt-[2px]">
              <label htmlFor="align" className="block leading-[14px]">Alignment</label>
              <div className="relative w-[90px]">
                <select id="align" defaultValue="Left" className="block h-[18px] w-full appearance-none rounded-[3px] border border-[#888] bg-white pl-1 leading-4"><option>Left</option><option>Right</option></select>
                <span className="pointer-events-none absolute top-[1px] right-[1px] flex h-4 w-3 items-center justify-center border-r-2 border-b-2 border-[#777] bg-[#d4d0c8]"><svg width="6" height="4"><path d="M0 0h6L3 4z" /></svg></span>
              </div>
            </div>
          </div>
          <div>
            <p className="leading-[14px]">Preview</p>
            <Preview />
          </div>
        </div>
      </div>
      <div className="relative flex h-8 items-start justify-end gap-[10px] bg-[#eaeaea] pt-[5px] pr-6">
        <button type="button" className="flex h-[23px] w-[100px] items-center rounded-[3px] bg-linear-to-b from-[#c9ef5a] to-[#a3e00e] pl-[42px] text-[#222]">OK<svg width="5" height="8" viewBox="0 0 5 8" className="mr-2 ml-auto"><path d="M.5.5L4.500 4l-4 3.500z" fill="#cdb96a" stroke="#6c7a1c" /></svg></button>
        <button type="button" className="flex h-[23px] w-[100px] items-center rounded-[3px] bg-linear-to-b from-[#ff7d45] to-[#f34202] pl-[31px] text-[#222]">Cancel<svg width="8" height="8" viewBox="0 0 8 8" className="mr-[7px] ml-auto"><path d="M1 1l6 6M7 1L1 7" stroke="#b05a3c" strokeWidth="1.500" /></svg></button>
        <svg width="12" height="12" viewBox="0 0 12 12" className="absolute right-0 bottom-0"><path d="M0 12L12 0M4 12l8-8M8 12l4-4" stroke="#555" strokeWidth="1.300" /></svg>
      </div>
    </section>
  );
}

function PageScrollbar() {
  return (
    <div className="flex w-[13px] shrink-0 flex-col border-l border-[#999] bg-[#dddcda]">
      <span className="flex h-[13px] shrink-0 items-center justify-center rounded-t-[6px] bg-[#f6f5f4]"><Arrow d="M4 2l3 4H1z" color="#aaa" /></span>
      <span className="flex h-[541px] flex-col items-center justify-center gap-[2px] rounded-[6px] border border-l-0 border-[#999] bg-linear-to-r from-white to-[#e6e4e1]"><i className="h-px w-[3px] bg-[#888]" /><i className="h-px w-[3px] bg-[#888]" /><i className="h-px w-[3px] bg-[#888]" /></span>
      <span className="mt-auto flex h-[14px] shrink-0 items-center justify-center rounded-[6px] border border-[#aaa] bg-[#f6f5f4]"><Arrow d="M4 6L1 2h6z" /></span>
    </div>
  );
}

function Page() {
  return (
    <div className="flex min-h-0 flex-1 bg-white font-['Liberation_Sans',sans-serif] text-sm text-[#999]">
      <div className="relative min-w-0 flex-1 overflow-hidden">
        <div className="flex h-[42px] rounded-b-[4px] border border-t-0 border-[#e9e9e9] bg-linear-to-b from-white to-[#f8f8f8]">
          <a href="#" className="ml-10 text-xl leading-[42px] text-[#bbb]">Lexgo Admin</a>
          <div className="ml-auto flex items-start border-l border-[#f0f0f0] pt-[6px] pr-10 pl-[9px]">
            <button type="button" className="flex h-[30px] w-[208px] items-center justify-center rounded-[4px] border border-[#e2e2e2] bg-linear-to-b from-white to-[#f4f4f4] whitespace-nowrap">
              <UserGlyph className="mr-1" />Welcome Super Admin!<svg width="7" height="7" className="mt-[2px] ml-[9px]"><path d="M0 0h7L3.500 7z" fill="#999" /></svg>
            </button>
          </div>
        </div>
        <div className="flex pr-5 pl-5">
          <SideMenu />
          <main className="ml-[31px] min-w-0 flex-1 pt-5">
            <div className="flex h-9 items-center gap-1 rounded-[4px] bg-[#fafafa] pl-[15px] font-bold">
              <UserGlyph /><a href="#" className="text-[#8ab5c7]">Manage Page</a>
            </div>
            <div className="mt-5 flex h-9 items-center bg-linear-to-b from-[#ade0ef] to-[#98c9d8] pr-4 pl-[7px] font-bold text-white">
              <h3 className="mb-1 flex items-center gap-[3px]"><ListGlyph />Add / Edit Page</h3>
              <a href="#" className="ml-auto flex h-6 w-[61px] items-center justify-center gap-1 rounded-[4px] border border-[#8c8c8c] bg-linear-to-b from-[#a0a0a0] to-[#8e8e8e] font-normal">
                <svg width="12" height="12" viewBox="0 0 12 12"><path d="M6 0v12L0 6zM12 0v12L6 6z" fill="#fff" /></svg>Back
              </a>
            </div>
            <div className="border border-[#e5e5e5] pt-5 pr-2 pl-5 leading-5">
              <p>Fields with * are required.</p>
              <label htmlFor="title" className="mt-[10px] block">Page Title *</label>
              <input id="title" defaultValue="Email Template" className="mt-[5px] block h-[30px] w-[220px] rounded-[4px] border border-[#e2e2e2] bg-[#f6f6f6] px-[7px] text-[#aaa]" />
              <p className="mt-5">Page Description *</p>
              <Editor />
            </div>
          </main>
        </div>
        <div className="absolute inset-0 flex items-center justify-center"><ImageDialog /></div>
        <svg width="13" height="21" viewBox="0 0 13 21" className="absolute top-[663px] left-[740px]"><path d="M1 1v16l4-3.500L7.500 19.500l2.500-1L7.500 13H12z" fill="#fff" stroke="#000" strokeWidth="1.200" /></svg>
      </div>
      <PageScrollbar />
    </div>
  );
}

export default function App() {
  return (
    <div className="flex h-screen flex-col overflow-hidden">
      <TopPanel />
      <div className="flex min-h-0 flex-1">
        <Launcher />
        <div className="flex min-w-0 flex-1 flex-col">
          <TabStrip />
          <NavBar />
          <Page />
          <NoticeBar />
        </div>
      </div>
    </div>
  );
}
